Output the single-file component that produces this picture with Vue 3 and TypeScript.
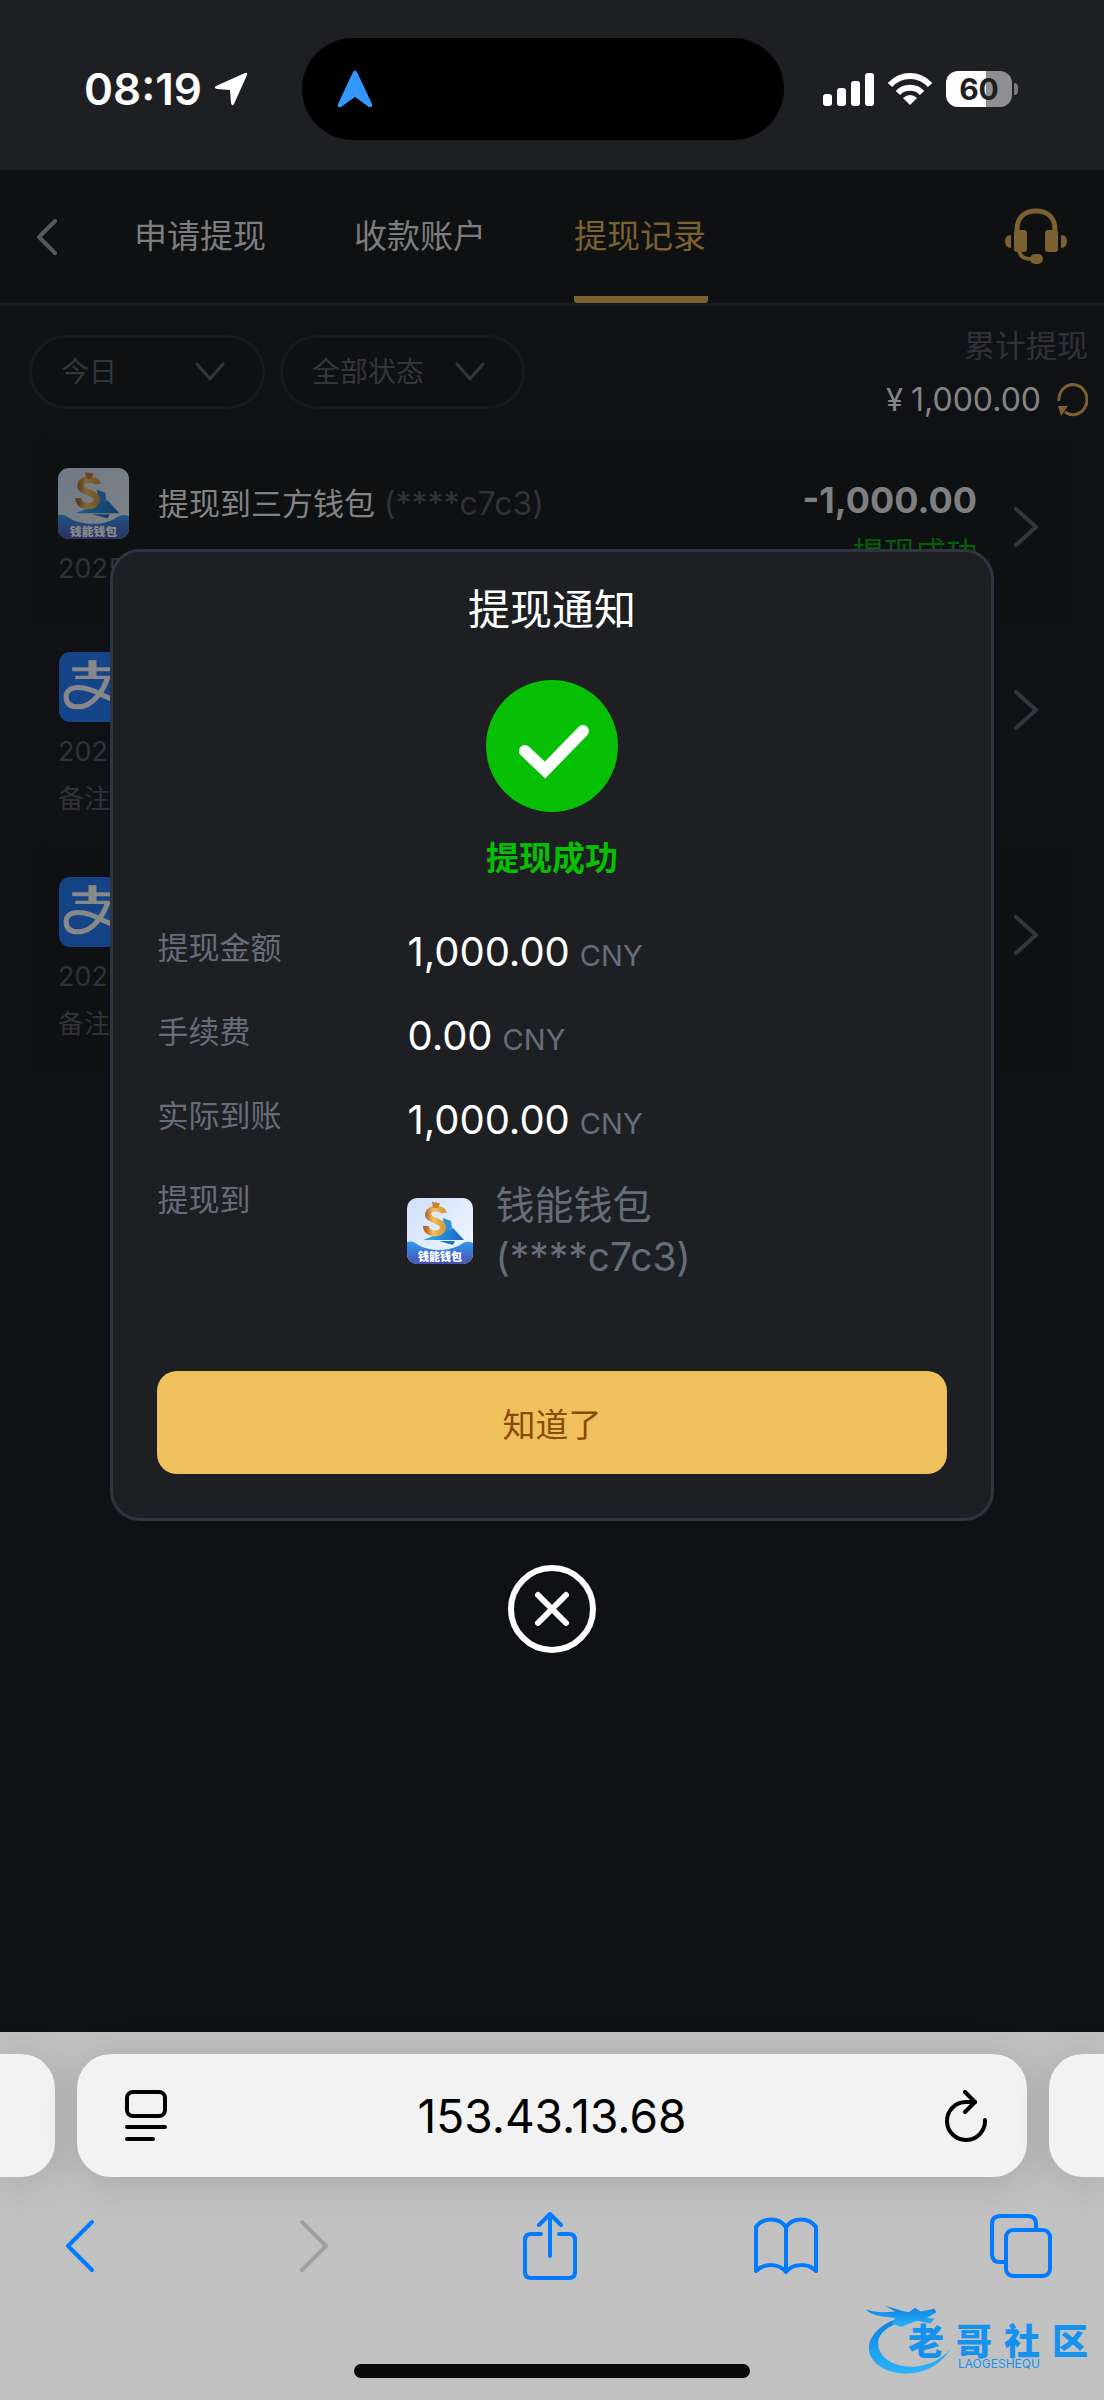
<script setup lang="ts">
import { ref } from 'vue'

interface WithdrawRecord {
  id: number
  icon: string
  title: string
  account: string
  amount: string
  date: string
  note: string
}

const tabs: string[] = ['申请提现', '收款账户', '提现记录']
const activeTab = ref<string>('提现记录')
const day = ref<string>('今日')
const state = ref<string>('全部状态')
const address = ref<string>('153.43.13.68')
const noticeOpen = ref<boolean>(true)

const records: WithdrawRecord[] = [
  { id: 1, icon: 'wallet', title: '提现到三方钱包', account: '(****c7c3)', amount: '-1,000.00', date: '2025', note: '' },
  { id: 2, icon: 'alipay', title: '', account: '', amount: '', date: '2025', note: '备注' },
  { id: 3, icon: 'alipay', title: '', account: '', amount: '', date: '2025', note: '备注' },
]

const amounts = [
  { label: '提现金额', value: '1,000.00' },
  { label: '手续费', value: '0.00' },
  { label: '实际到账', value: '1,000.00' },
]

const brand: string[] = ['老', '哥', '社', '区']
</script>

<template>
  <div class="phone">
    <svg class="defs" width="0" height="0" aria-hidden="true">
      <defs>
        <linearGradient id="sky" x1="0" y1="0" x2="1" y2="1">
          <stop offset="0" stop-color="#cfe0fa" />
          <stop offset="1" stop-color="#f4f8ff" />
        </linearGradient>
        <linearGradient id="sea" x1="0" y1="0" x2="0" y2="1">
          <stop offset="0" stop-color="#2e9af0" />
          <stop offset="1" stop-color="#4a4fb4" />
        </linearGradient>
        <linearGradient id="gold" x1="0" y1="0" x2="1" y2="0">
          <stop offset="0" stop-color="#b8682c" />
          <stop offset="0.4" stop-color="#f3c05c" />
          <stop offset="1" stop-color="#d99a3a" />
        </linearGradient>
        <linearGradient id="plane" x1="0" y1="0" x2="1" y2="0">
          <stop offset="0" stop-color="#2fb0e6" />
          <stop offset="1" stop-color="#1565c8" />
        </linearGradient>
        <linearGradient id="dragon" x1="0" y1="0" x2="0" y2="1">
          <stop offset="0" stop-color="#0a7fe0" />
          <stop offset="1" stop-color="#2cb4fb" />
        </linearGradient>
      </defs>
      <symbol id="wallet" viewBox="0 0 66 66">
        <rect width="66" height="66" rx="10" fill="url(#sky)" />
        <path d="M36 20 L44 23 L45 30 L38 34 Z" fill="#2a8fdc" />
        <path d="M16 42 L46 30 L57 42 Z" fill="url(#plane)" />
        <path d="M32 43 L48 43 L46 47 Z" fill="#1b73cf" />
        <path d="M37 15 C36 10 23 8 21 16 C20 23 37 22 36 30 C34 38 19 37 19 28" fill="none" stroke="url(#gold)" stroke-width="6" />
        <path d="M25 4 L33 5 L31 10 L26 10 Z" fill="#c9812f" />
        <path d="M0 44 C6 42 9 46 15 49 C27 53 40 53 51 48 C56 45 60 42 66 45 V56 A10 10 0 0 1 56 66 H10 A10 10 0 0 1 0 56 Z" fill="url(#sea)" />
        <text x="33" y="63" text-anchor="middle" font-size="11" font-weight="900" fill="#fff" font-family="Noto Sans CJK SC, sans-serif">钱能钱包</text>
      </symbol>
      <symbol id="alipay" viewBox="0 0 70 70">
        <rect x="1" y="1" width="69" height="69" rx="11" fill="#1a77fb" />
        <g fill="none" stroke="#fff">
          <path d="M14 18 H56" stroke-width="4" />
          <path d="M34 9 V27" stroke-width="8" />
          <path d="M17 26 H52" stroke-width="3" />
          <path d="M49 26 C45 38 35 55 20 55 C10 55 8 50 8 45 C8 39 13 36 20 36 C34 36 45 46 70 54" stroke-width="5" />
        </g>
      </symbol>
    </svg>

    <header class="status">
      <div class="clock">
        <time>08:19</time>
        <svg width="34" height="34" viewBox="0 0 34 34" aria-hidden="true">
          <path d="M31 1 Q34 0 33 3 L20 32 Q18 35 17 31 L16 18 L3 17 Q-1 16 2 14 Z" fill="#fff" />
        </svg>
      </div>
      <div class="island">
        <svg width="36" height="38" viewBox="0 0 36 38" aria-hidden="true">
          <path d="M16 2 Q18 -1 20 2 L35 34 Q36 38 32 37 L18 27 L4 37 Q0 38 1 34 Z" fill="#3397ff" />
        </svg>
      </div>
      <div class="signals">
        <svg width="51" height="33" viewBox="0 0 51 33" fill="#fff" aria-hidden="true">
          <rect x="0" y="21" width="9" height="12" rx="3" />
          <rect x="14" y="15" width="9" height="18" rx="3" />
          <rect x="28" y="8" width="9" height="25" rx="3" />
          <rect x="42" y="0" width="9" height="33" rx="3" />
        </svg>
        <svg width="44" height="32" viewBox="0 0 44 32" aria-hidden="true">
          <g fill="none" stroke="#fff" stroke-width="6">
            <path d="M2 12 C13 0 31 0 42 12" />
            <path d="M10 20 C16 13 28 13 34 20" />
          </g>
          <path d="M22 32 L15 25 Q22 19 29 25 Z" fill="#fff" />
        </svg>
        <span class="battery"><b>60</b></span>
      </div>
    </header>

    <main class="page">
      <nav class="tabs">
        <button class="back" aria-label="返回">
          <svg width="22" height="36" viewBox="0 0 22 36" fill="none" stroke="#54575f" stroke-width="4" stroke-linecap="round" stroke-linejoin="round">
            <path d="M19 2 L3 18 L19 34" />
          </svg>
        </button>
        <button v-for="tab in tabs" :key="tab" class="tab" :class="{ active: tab === activeTab }" @click="activeTab = tab">
          {{ tab }}
        </button>
        <button class="service" aria-label="客服">
          <svg width="62" height="57" viewBox="0 0 62 57" aria-hidden="true">
            <g fill="none" stroke="#7a612f">
              <path d="M12 26 V22 C12 9 20 3 31 3 C42 3 50 9 50 22 V26" stroke-width="5" />
              <path d="M14 42 C15 49 19 51 28 51" stroke-width="4" />
            </g>
            <g fill="#7a612f">
              <rect x="9" y="22" width="13" height="22" rx="3" />
              <rect x="40" y="22" width="13" height="22" rx="3" />
              <path d="M6 27 V40 Q0 40 0 33 Q0 27 6 27 Z" />
              <path d="M56 27 V40 Q62 40 62 33 Q62 27 56 27 Z" />
              <rect x="25" y="46" width="13" height="10" rx="5" />
            </g>
          </svg>
        </button>
      </nav>

      <section class="filters">
        <label class="pill">
          <select v-model="day" aria-label="日期">
            <option>今日</option>
          </select>
          <svg width="30" height="20" viewBox="0 0 30 20" fill="none" stroke="#34363c" stroke-width="3" stroke-linecap="round" stroke-linejoin="round"><path d="M2 2 L15 17 L28 2" /></svg>
        </label>
        <label class="pill wide">
          <select v-model="state" aria-label="状态">
            <option>全部状态</option>
          </select>
          <svg width="30" height="20" viewBox="0 0 30 20" fill="none" stroke="#34363c" stroke-width="3" stroke-linecap="round" stroke-linejoin="round"><path d="M2 2 L15 17 L28 2" /></svg>
        </label>
        <div class="total">
          <span class="total-label">累计提现</span>
          <span class="total-value">
            <span class="yen">¥</span>1,000.00
            <button aria-label="刷新">
              <svg width="31" height="34" viewBox="0 0 31 34" aria-hidden="true">
                <path d="M2 18 A14 15 0 1 1 8 29" fill="none" stroke="#7a612f" stroke-width="3" />
                <path d="M1 23 H11 L4 33 Z" fill="#7a612f" />
              </svg>
            </button>
          </span>
        </div>
      </section>

      <ul class="records">
        <li v-for="item in records" :key="item.id" class="record" :class="{ noted: item.note }">
          <div class="record-main">
            <div class="record-info">
              <div class="record-title">
                <svg class="logo" aria-hidden="true"><use :href="'#' + item.icon" /></svg>
                <span>{{ item.title }} <i>{{ item.account }}</i></span>
              </div>
              <div class="record-date">{{ item.date }}</div>
            </div>
            <div v-if="item.amount" class="record-sum">
              <strong>{{ item.amount }}</strong>
              <span>提现成功</span>
            </div>
            <svg class="go" width="26" height="40" viewBox="0 0 26 40" fill="none" stroke="#34363e" stroke-width="4" stroke-linecap="round" stroke-linejoin="round"><path d="M3 2 L23 20 L3 38" /></svg>
          </div>
          <div v-if="item.note" class="record-note">{{ item.note }}</div>
        </li>
      </ul>

      <div v-if="noticeOpen" class="overlay">
        <section class="dialog" role="dialog" aria-labelledby="notice-title">
          <h2 id="notice-title">提现通知</h2>
          <svg class="check" width="132" height="132" viewBox="0 0 132 132" aria-hidden="true">
            <circle cx="66" cy="66" r="66" fill="#07bf05" />
            <path d="M39 71 L59 90 L97 51" fill="none" stroke="#fff" stroke-width="12" stroke-linecap="round" />
          </svg>
          <p class="result">提现成功</p>
          <dl>
            <div v-for="row in amounts" :key="row.label" class="row">
              <dt>{{ row.label }}</dt>
              <dd class="money"><span>{{ row.value }}</span><small>CNY</small></dd>
            </div>
            <div class="row">
              <dt>提现到</dt>
              <dd class="target">
                <svg width="66" height="66" aria-hidden="true"><use href="#wallet" /></svg>
                <span>钱能钱包<br />(****c7c3)</span>
              </dd>
            </div>
          </dl>
          <button class="confirm" @click="noticeOpen = false">知道了</button>
        </section>
        <button class="close" aria-label="关闭" @click="noticeOpen = false">
          <svg width="88" height="88" viewBox="0 0 88 88" fill="none" stroke="#fff" stroke-width="6" stroke-linecap="round">
            <circle cx="44" cy="44" r="41" />
            <path d="M30 30 L58 58 M58 30 L30 58" />
          </svg>
        </button>
      </div>
    </main>

    <footer class="browser">
      <div class="address-row">
        <span class="peek left"></span>
        <div class="address">
          <button aria-label="页面设置">
            <svg width="42" height="52" viewBox="0 0 42 52" fill="none" stroke="#000" stroke-width="4" stroke-linecap="round">
              <rect x="2" y="2" width="38" height="24" rx="6" />
              <path d="M2 37 H40 M2 49 H28" />
            </svg>
          </button>
          <input v-model="address" type="text" aria-label="网址" />
          <button aria-label="重新载入">
            <svg width="42" height="52" viewBox="0 0 42 52" fill="none" stroke="#000" stroke-width="4" stroke-linecap="round" stroke-linejoin="round">
              <path d="M40 30 A19 19 0 1 1 21 12 H30" />
              <path d="M20 2 L30 12 L20 22" />
            </svg>
          </button>
        </div>
        <span class="peek right"></span>
      </div>
      <div class="toolbar">
        <button aria-label="后退">
          <svg width="32" height="54" viewBox="0 0 32 54"><path d="M29 3 L5 27 L29 51" /></svg>
        </button>
        <button aria-label="前进" class="off">
          <svg width="32" height="54" viewBox="0 0 32 54"><path d="M3 3 L27 27 L3 51" /></svg>
        </button>
        <button aria-label="分享">
          <svg width="54" height="68" viewBox="0 0 54 68">
            <path d="M18 22 H8 Q2 22 2 28 V60 Q2 66 8 66 H46 Q52 66 52 60 V28 Q52 22 46 22 H36 M27 44 V3 M16 13 L27 2 L38 13" />
          </svg>
        </button>
        <button aria-label="书签">
          <svg width="66" height="58" viewBox="0 0 66 58">
            <path d="M33 55 V10 C26 0 10 0 3 10 V54 C11 46 26 46 33 55 C40 46 55 46 63 54 V10 C56 0 40 0 33 10" />
          </svg>
        </button>
        <button aria-label="标签页">
          <svg width="62" height="64" viewBox="0 0 62 64">
            <rect x="16" y="16" width="44" height="46" rx="7" />
            <path d="M16 48 H10 Q2 48 2 40 V10 Q2 2 10 2 H38 Q46 2 46 10 V16" />
          </svg>
        </button>
      </div>
      <div class="home"></div>
      <div class="brand">
        <svg width="90" height="70" viewBox="0 0 92 76" preserveAspectRatio="none" aria-hidden="true">
          <path d="M34 14 C10 22 -2 40 5 56 C16 80 66 84 86 48 C66 74 24 72 14 50 C9 36 16 24 42 16 Z" fill="url(#dragon)" />
          <path d="M0 5 C12 9 20 8 30 7 L20 1 C34 5 38 7 44 8 L50 3 L56 7 L70 4 L72 8 L62 14 L70 15 L66 20 L52 17 L36 24 L26 20 L30 14 C18 13 6 12 0 5 Z" fill="url(#dragon)" />
        </svg>
        <div class="brand-text">
          <div class="brand-name"><span v-for="ch in brand" :key="ch">{{ ch }}</span></div>
          <div class="brand-sub">LAOGESHEQU</div>
        </div>
      </div>
    </footer>
  </div>
</template>

<style>
body {
  background: #101115;
}
</style>

<style scoped>
* {
  box-sizing: border-box;
}

.phone {
  display: flex;
  flex-direction: column;
  min-height: 100vh;
  font-family: Inter, "Noto Sans CJK SC", sans-serif;
  background: #101115;
  overflow: hidden;
}

.defs {
  position: absolute;
  visibility: hidden;
}

svg {
  display: block;
  flex: none;
}

button {
  padding: 0;
  border: 0;
  background: none;
  font: inherit;
  color: inherit;
}

.status {
  display: grid;
  grid-template-columns: 151fr 482px 160fr;
  align-items: center;
  height: 170px;
  padding-top: 8px;
  background: #1e1f23;
  color: #fff;
}

.clock {
  display: flex;
  align-items: center;
  gap: 12px;
  padding-left: 84px;
  font-size: 44px;
  font-weight: 600;
  line-height: 48px;
}

.island {
  display: flex;
  align-items: center;
  height: 102px;
  padding-left: 35px;
  border-radius: 51px;
  background: #000;
}

.signals {
  display: flex;
  align-items: center;
  gap: 14px;
  padding-left: 39px;
}

.battery {
  position: relative;
  width: 66px;
  height: 36px;
  border-radius: 12px;
  background: linear-gradient(90deg, #fff 60%, #8f8f91 60%);
  color: #1e1f23;
  font-size: 30px;
  line-height: 36px;
  text-align: center;
}

.battery::after {
  content: "";
  position: absolute;
  left: 68px;
  top: 12px;
  width: 4px;
  height: 12px;
  border-radius: 0 4px 4px 0;
  background: #77787a;
}

.page {
  position: relative;
  flex: 1;
}

.tabs {
  display: flex;
  align-items: center;
  height: 136px;
  padding: 0 37px 0 36px;
  border-bottom: 3px solid #191b20;
  background: #0e1011;
}

.back {
  margin-right: 76px;
}

.tab {
  width: 134px;
  height: 133px;
  margin-right: 86px;
  padding-top: 5px;
  border-bottom: 7px solid transparent;
  border-radius: 3px;
  color: #7d7d7e;
  font-size: 33px;
  line-height: 48px;
  text-align: left;
  white-space: nowrap;
}

.tab.active {
  border-bottom-color: #7a612f;
  color: #7a612f;
}

.service {
  margin-left: auto;
}

.filters {
  display: flex;
  align-items: flex-start;
  gap: 15px;
  padding: 18px 16px 0 29px;
}

.pill {
  display: flex;
  align-items: center;
  width: 236px;
  height: 74px;
  margin-top: 11px;
  padding: 0 37px 0 29px;
  border: 3px solid #17191e;
  border-radius: 37px;
  background: #0e1011;
}

.pill.wide {
  width: 245px;
}

.pill select {
  flex: 1;
  min-width: 0;
  padding: 0;
  border: 0;
  appearance: none;
  background: none;
  color: #34363c;
  font: 28px/40px Inter, "Noto Sans CJK SC", sans-serif;
}

.total {
  display: flex;
  flex-direction: column;
  align-items: flex-end;
  margin-left: auto;
}

.total-label {
  color: #303237;
  font-size: 31px;
  line-height: 44px;
}

.total-value {
  display: flex;
  align-items: center;
  height: 64px;
  color: #848486;
  font-size: 32px;
  line-height: 40px;
}

.yen {
  margin-right: 8px;
  font-size: 31px;
}

.total-value button {
  margin-left: 16px;
}

.records {
  margin: 6px 30px 0;
  padding: 0;
  list-style: none;
}

.record {
  padding: 30px 35px 35px 28px;
  border-radius: 16px;
}

.record.noted {
  padding-bottom: 29px;
}

.record:nth-child(odd) {
  background: #0e1011;
}

.record-main {
  display: flex;
  align-items: center;
  height: 118px;
}

.record-info {
  align-self: stretch;
}

.record-title {
  display: flex;
  align-items: center;
  gap: 29px;
  color: #838384;
  font-size: 31px;
  line-height: 44px;
}

.record-title i {
  color: #303238;
  font-size: 32px;
  font-style: normal;
}

.logo {
  width: 71px;
  height: 71px;
  opacity: 0.5;
}

.record-date {
  margin-top: 12px;
  color: #303238;
  font-size: 27px;
  line-height: 36px;
}

.record-sum {
  display: flex;
  flex-direction: column;
  align-items: flex-end;
  align-self: stretch;
  margin-left: auto;
  padding-top: 9px;
}

.record-sum strong {
  color: #7f7f80;
  font-size: 36px;
  line-height: 46px;
}

.record-sum span {
  margin-top: 8px;
  color: #045f07;
  font-size: 31px;
  line-height: 44px;
}

.go {
  margin-left: auto;
}

.record-sum + .go {
  margin-left: 36px;
}

.record-note {
  margin-top: 12px;
  color: #303238;
  font-size: 26px;
  line-height: 36px;
}

.overlay {
  position: absolute;
  inset: 0;
  display: flex;
  flex-direction: column;
  align-items: center;
  justify-content: center;
  gap: 44px;
}

.dialog {
  display: flex;
  flex-direction: column;
  align-items: center;
  width: 80%;
  padding: 28px 44px 44px;
  border: 3px solid #2e3440;
  border-radius: 30px;
  background: #1e1f23;
}

.dialog h2 {
  margin: 0 0 40px;
  color: #fff;
  font-size: 42px;
  font-weight: 400;
  line-height: 60px;
}

.result {
  margin: 22px 0 24px;
  color: #07bf05;
  font-size: 33px;
  font-weight: 700;
  line-height: 48px;
}

dl {
  width: 100%;
  margin: 0;
}

.row {
  display: grid;
  grid-template-columns: 250px 1fr;
  align-items: start;
  color: #666d79;
}

dt {
  font-size: 31px;
  line-height: 84px;
}

dd {
  margin: 0;
}

.money {
  display: flex;
  align-items: baseline;
  gap: 10px;
  padding-top: 8px;
  color: #fff;
  font-size: 40px;
  line-height: 76px;
}

.money small {
  color: #666d79;
  font-size: 29px;
  line-height: 40px;
}

.target {
  display: flex;
  align-items: center;
  gap: 22px;
  padding-top: 21px;
  font-size: 39px;
  line-height: 52px;
}

.confirm {
  width: 100%;
  height: 103px;
  margin-top: 88px;
  border-radius: 20px;
  background: #efc05c;
  color: #8a4a08;
  font-size: 33px;
}

.browser {
  position: relative;
  height: 368px;
  padding-top: 22px;
  background: #c1c1c1;
}

.address-row {
  display: flex;
  gap: 22px;
}

.address {
  display: flex;
  align-items: center;
  flex: 1;
  min-width: 0;
  height: 123px;
  padding: 0 40px 0 48px;
  border-radius: 34px;
  background: #f2f2f2;
  box-shadow: 0 4px 40px rgba(0, 0, 0, 0.14);
}

.address input {
  flex: 1;
  min-width: 0;
  padding: 0 8px 0 0;
  border: 0;
  background: none;
  color: #000;
  font: 46px/60px Inter, sans-serif;
  text-align: center;
}

.peek {
  width: 55px;
  height: 123px;
  background: #f2f2f2;
  box-shadow: 0 4px 40px rgba(0, 0, 0, 0.14);
}

.peek.left {
  border-radius: 0 34px 34px 0;
}

.peek.right {
  border-radius: 34px 0 0 34px;
}

.toolbar {
  display: flex;
  align-items: center;
  justify-content: space-between;
  height: 70px;
  margin-top: 34px;
  padding: 0 50px 0 46px;
}

.toolbar button {
  display: flex;
  justify-content: center;
  width: 66px;
}

.toolbar svg {
  fill: none;
  stroke: #007aff;
  stroke-width: 4;
  stroke-linecap: round;
  stroke-linejoin: round;
}

.toolbar .off svg {
  stroke: #a0a0a0;
}

.home {
  width: 396px;
  height: 14px;
  margin: 83px auto 0;
  border-radius: 7px;
  background: #0a0a0a;
}

.brand {
  position: absolute;
  right: 16px;
  bottom: 25px;
  display: flex;
  align-items: flex-end;
}

.brand-text {
  margin: 0 0 4px -48px;
  color: #1592ee;
}

.brand-name {
  display: flex;
  gap: 12px;
  font-size: 36px;
  font-weight: 900;
  line-height: 30px;
}

.brand-sub {
  margin-left: 50px;
  font-size: 12px;
  line-height: 14px;
}
</style>
